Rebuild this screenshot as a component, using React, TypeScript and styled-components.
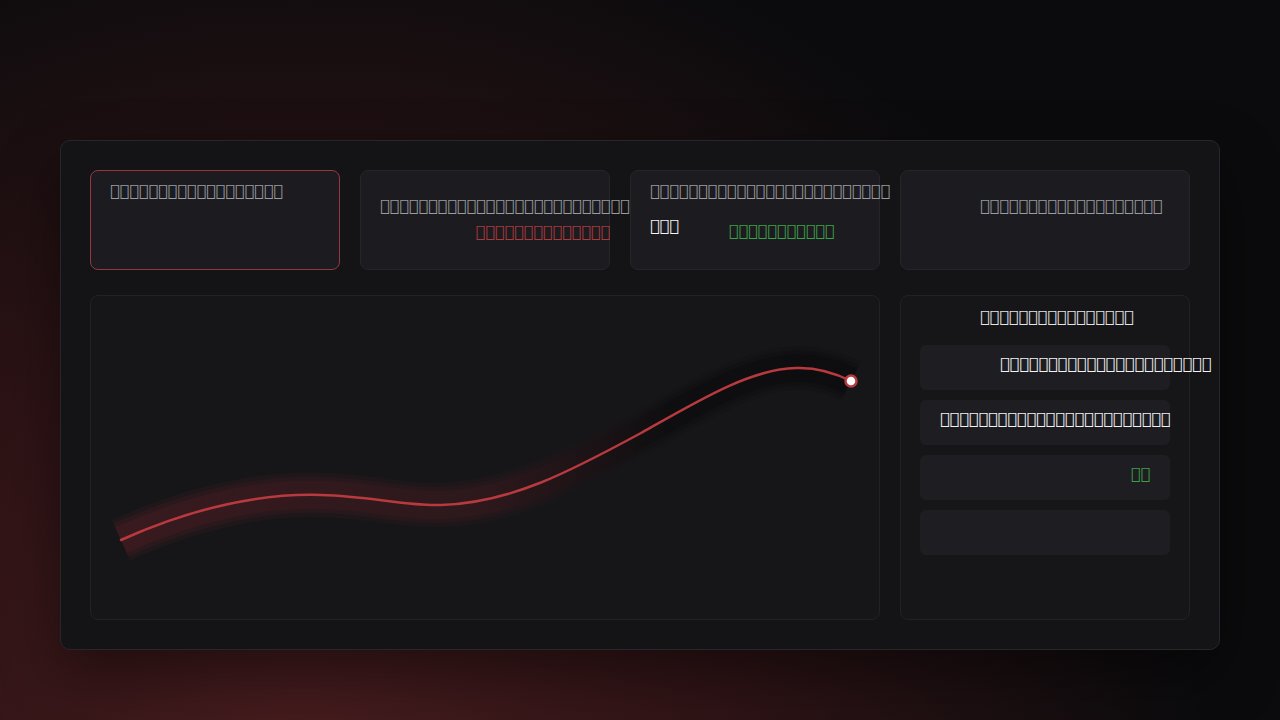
import React from "react";
import styled, { createGlobalStyle } from "styled-components";

type Tone = "muted" | "red" | "green" | "white";

const toneColor: Record<Tone, string> = {
  muted: "#9a9a9f",
  red: "#ab393d",
  green: "#3f9f48",
  white: "#f2f2f4",
};

const GlobalStyle = createGlobalStyle`
  html, body {
    margin: 0;
    padding: 0;
    background: #0b0b0d;
  }
  body {
    font-family: "DejaVu Sans", sans-serif;
  }
`;

// the source strings have no glyph in any installed font, so they show as empty boxes
const glyphs = (start: number, n: number) =>
  Array.from({ length: n }, (_, i) => String.fromCharCode(start + i)).join("");

const stats = {
  revenue: glyphs(0xe000, 18),
  orders: glyphs(0xe020, 26),
  ordersDelta: glyphs(0xe040, 14),
  users: glyphs(0xe060, 25),
  usersValue: glyphs(0xe080, 3),
  usersDelta: glyphs(0xe090, 11),
  average: glyphs(0xe0a0, 19),
};

const sideTitle = glyphs(0xe100, 16);

const rows = [
  { text: glyphs(0xe120, 22), tone: "white" as Tone, indent: 80, end: false },
  { text: glyphs(0xe140, 24), tone: "white" as Tone, indent: 20, end: false },
  { text: glyphs(0xe160, 2), tone: "green" as Tone, indent: 20, end: true },
  { text: "", tone: "white" as Tone, indent: 20, end: false },
];

const curve =
  "M30 244 C90 217 160 197 230 199 C280 200 310 210 350 209 C420 207 480 175 550 137 C610 103 660 73 705 72 C730 71 748 79 760 85";

// soft glow under the line, built from a few stacked strokes
const bandLayers = [
  { width: 44, opacity: 0.35 },
  { width: 36, opacity: 0.45 },
  { width: 28, opacity: 0.55 },
];

const App = () => {
  return (
    <Page>
      <GlobalStyle />
      <Panel>
        <StatCard $active $justify="flex-start">
          <Label $tone="muted">{stats.revenue}</Label>
        </StatCard>

        <StatCard $justify="center">
          <Label $tone="muted">{stats.orders}</Label>
          <Delta $tone="red" $shift={-20}>{stats.ordersDelta}</Delta>
        </StatCard>

        <StatCard $justify="flex-start">
          <Label $tone="muted">{stats.users}</Label>
          <ValueRow>
            <Value>{stats.usersValue}</Value>
            <Label $tone="green" $drop={5}>{stats.usersDelta}</Label>
          </ValueRow>
        </StatCard>

        <StatCard $justify="center" $indent={80}>
          <Label $tone="muted">{stats.average}</Label>
          <Delta $tone="red" $shift={0}></Delta>
        </StatCard>

        <ChartCard>
          <svg width="100%" height="100%" viewBox="0 0 788 323">
            <defs>
              <linearGradient id="band" gradientUnits="userSpaceOnUse" x1="30" y1="0" x2="760" y2="0">
                <stop offset="0" stopColor="rgb(105,32,38)" stopOpacity="0.36" />
                <stop offset="0.5" stopColor="rgb(90,28,33)" stopOpacity="0.28" />
                <stop offset="0.75" stopColor="rgb(0,0,0)" stopOpacity="0.3" />
                <stop offset="1" stopColor="rgb(0,0,0)" stopOpacity="0.34" />
              </linearGradient>
            </defs>
            {bandLayers.map((layer) => (
              <path
                key={layer.width}
                d={curve}
                fill="none"
                stroke="url(#band)"
                strokeWidth={layer.width}
                opacity={layer.opacity}
              />
            ))}
            <path d={curve} fill="none" stroke="#b8393e" strokeWidth="2.5" strokeLinecap="round" />
            <circle cx="760" cy="85" r="5.5" fill="#ffffff" stroke="#b8393e" strokeWidth="2.5" />
          </svg>
        </ChartCard>

        <SidePanel>
          <SideTitle>{sideTitle}</SideTitle>
          <RowList>
            {rows.map((row, i) => (
              <ListRow key={i} $indent={row.indent} $end={row.end}>
                <Label $tone={row.tone}>{row.text}</Label>
              </ListRow>
            ))}
          </RowList>
        </SidePanel>
      </Panel>
    </Page>
  );
};

export default App;

const Page = styled.div`
  width: 1280px;
  height: 720px;
  box-sizing: border-box;
  padding: 140px 60px 70px;
  background: radial-gradient(
      ellipse 900px 850px at 300px 740px,
      #461c1e 0%,
      #2d1315 50%,
      #0b0b0d 100%
    ),
    #0b0b0d;
  overflow: hidden;
`;

const Panel = styled.div`
  box-sizing: border-box;
  width: 1160px;
  height: 510px;
  padding: 29px;
  background: #141416;
  border: 1px solid #27272b;
  border-radius: 10px;
  box-shadow: 0 24px 60px rgba(0, 0, 0, 0.45);
  display: grid;
  grid-template-columns: repeat(3, 250px) 290px;
  grid-template-rows: 100px 325px;
  column-gap: 20px;
  row-gap: 25px;
`;

const StatCard = styled.div<{ $active?: boolean; $justify: string; $indent?: number }>`
  box-sizing: border-box;
  display: flex;
  flex-direction: column;
  justify-content: ${(p) => p.$justify};
  padding: 10px 19px 12px ${(p) => (p.$indent ?? 20) - 1}px;
  background: #1c1c20;
  border: 1px solid ${(p) => (p.$active ? "#93393e" : "#26262a")};
  border-radius: 8px;
  min-width: 0;
`;

const Label = styled.span<{ $tone: Tone; $drop?: number }>`
  display: block;
  min-height: 20px;
  white-space: nowrap;
  font-family: "DejaVu Sans", sans-serif;
  font-size: 16px;
  line-height: 20px;
  color: ${(p) => toneColor[p.$tone]};
  margin-top: ${(p) => p.$drop ?? 0}px;
`;

const Delta = styled(Label)<{ $shift: number }>`
  align-self: flex-end;
  margin-top: 6px;
  margin-right: ${(p) => p.$shift}px;
`;

const ValueRow = styled.div`
  display: flex;
  align-items: flex-start;
  gap: 50px;
  margin-top: 15px;
`;

const Value = styled.span`
  display: block;
  white-space: nowrap;
  font-family: "DejaVu Sans", sans-serif;
  font-size: 16px;
  line-height: 20px;
  color: #f4f4f6;
  font-weight: 600;
`;

const ChartCard = styled.div`
  grid-column: span 3;
  box-sizing: border-box;
  background: #161619;
  border: 1px solid #222225;
  border-radius: 8px;
  overflow: hidden;
`;

const SidePanel = styled.div`
  box-sizing: border-box;
  display: flex;
  flex-direction: column;
  padding: 11px 19px 13px;
  background: #161619;
  border: 1px solid #222225;
  border-radius: 8px;
  min-width: 0;
`;

const SideTitle = styled.div`
  white-space: nowrap;
  font-family: "DejaVu Sans", sans-serif;
  font-size: 16px;
  line-height: 20px;
  color: #e4e4e7;
  padding-left: 60px;
  margin-bottom: 18px;
`;

const RowList = styled.div`
  display: flex;
  flex-direction: column;
  gap: 10px;
`;

const ListRow = styled.div<{ $indent: number; $end: boolean }>`
  box-sizing: border-box;
  height: 45px;
  display: flex;
  align-items: flex-start;
  justify-content: ${(p) => (p.$end ? "flex-end" : "flex-start")};
  padding: 9px 20px 0 ${(p) => p.$indent}px;
  background: #1e1e22;
  border-radius: 6px;
`;
